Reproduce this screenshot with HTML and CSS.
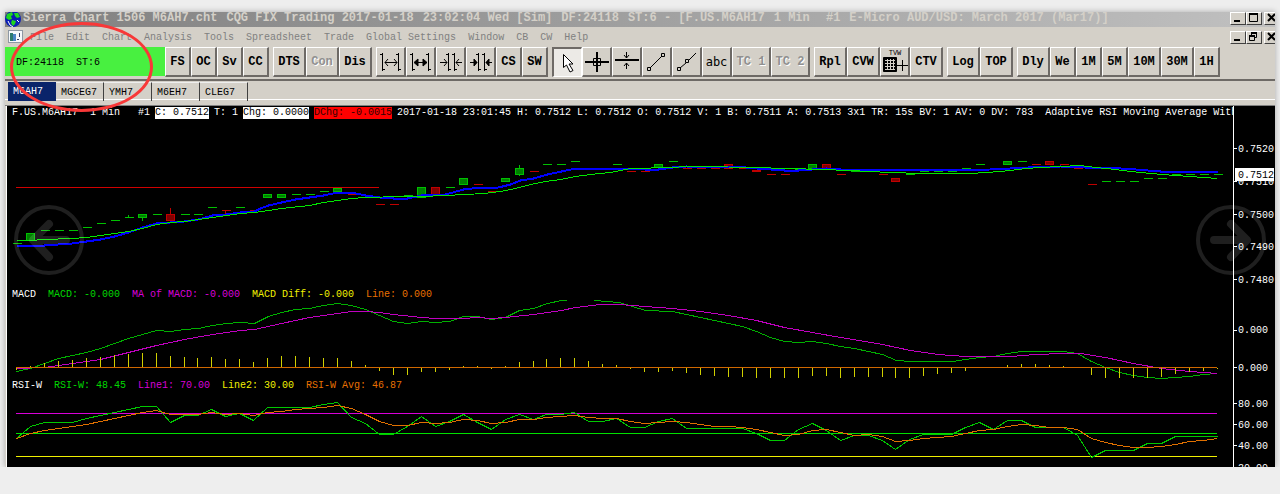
FILE: index.html
```html
<!DOCTYPE html>
<html lang="en">
    <head>
        <meta charset="utf-8">
        <title>Sierra Chart</title>
        <link rel="stylesheet" href="styles.css">
    </head>
    <body>
        <main class="window">
            <header class="title-bar">
                <svg class="globe" viewBox="0 0 16 15">
                    <circle cx="8" cy="7" r="8" fill="#0a1cb4"/>
                    <path d="M2 2L7 0 8 3 6 4 7 7 4 8 1 6zM9 1L13 1 15 5 12 6 10 4zM7 8L11 9 10 12 8 14 6 11z" fill="#1fd61f"/>
                    <path d="M3 9L5 13 8 15M12 8L14 10" stroke="#fff" fill="none"/>
                </svg>
                <div class="title">
                    <span>Sierra Chart 1506 M6AH7.cht</span>
                    <span>CQG FIX Trading 2017-01-18</span>
                    <span>23:02:04 Wed [Sim]</span>
                    <span>DF:24118</span>
                    <span>ST:6 - [F.US.M6AH17</span>
                    <span>1 Min</span>
                    <span>&nbsp;#1</span>
                    <span>E-Micro AUD/USD: March 2017 (Mar17)]</span>
                </div>
                <div class="controls">
                    <button aria-label="Minimize"><svg viewBox="0 0 16 13"><path d="M4 9h6" stroke="#000" stroke-width="2"/></svg></button>
                    <button aria-label="Maximize"><svg viewBox="0 0 16 13"><path d="M3.500 2v7.500h8v-7.500z" stroke="#000" fill="none"/><path d="M3 2h9" stroke="#000" stroke-width="2"/></svg></button>
                    <button class="close" aria-label="Close"><svg viewBox="0 0 16 13"><path d="M4 2l7 7M11 2l-7 7" stroke="#000" stroke-width="2"/></svg></button>
                </div>
            </header>

            <nav class="menu-bar">
                <svg class="doc" viewBox="0 0 15 14">
                    <path d="M0 0h15v13h-15z" fill="#8e98a4"/>
                    <path d="M1 1h13v11h-13z" fill="#f5f8fb"/>
                    <path d="M2 3h3v8h-3z" fill="#2c7a6e"/><path d="M5 4h3v7h-3z" fill="#4a86c8"/>
                    <path d="M9 9h2v1h-2zM11 3h1v4h-1z" fill="#346"/>
                </svg>
                <div class="menus">
                    <a href="#">File</a><a href="#">Edit</a><a href="#">Chart</a><a href="#">Analysis</a><a href="#">Tools</a><a href="#">Spreadsheet</a><a href="#">Trade</a><a href="#">Global Settings</a><a href="#">Window</a><a href="#">CB</a><a href="#">CW</a><a href="#">Help</a>
                </div>
                <div class="controls">
                    <button aria-label="Minimize chart"><svg viewBox="0 0 16 13"><path d="M4 9h6" stroke="#000" stroke-width="2"/></svg></button>
                    <button aria-label="Restore chart"><svg viewBox="0 0 16 13"><path d="M5.500 4v-2.500h5v5h-2M3.500 5.500h5v4h-5z" stroke="#000" fill="none"/><path d="M5 2h6M3 5h6" stroke="#000" stroke-width="2"/></svg></button>
                    <button class="close" aria-label="Close chart"><svg viewBox="0 0 16 13"><path d="M4 2l7 7M11 2l-7 7" stroke="#000" stroke-width="2"/></svg></button>
                </div>
            </nav>

            <div class="toolbar">
                <div class="status"><span>DF:24118</span><span>ST:6</span></div>
                <div class="group">
                    <button>FS</button><button>OC</button><button>Sv</button><button>CC</button>
                </div>
                <div class="group">
                    <button class="wide">DTS</button><button class="wide" disabled>Con</button><button class="wide">Dis</button>
                </div>
                <div class="group">
                    <button class="icon" aria-label="Increase bar spacing"><svg viewBox="0 0 30 30"><path d="M6.500 6v18M4 7.500h3M7 22.500h2M22.500 6v18M20 7.500h3M23 22.500h2M9 15.500h12M12 12l-3 3.500 3 3.500M18 12l3 3.500-3 3.500"/></svg></button>
                    <button class="icon" aria-label="Increase bar width"><svg viewBox="0 0 30 30"><path d="M6.500 6v18M4 7.500h3M7 22.500h2M22.500 6v18M20 7.500h3M23 22.500h2M9 15.500h12"/><path class="solid" d="M12 12v7l-4-3.500zM17 12v7l4-3.500z"/></svg></button>
                    <button class="icon" aria-label="Decrease bar spacing"><svg viewBox="0 0 30 30"><path d="M12.500 6v18M10 7.500h3M13 22.500h2M18.500 6v18M16 7.500h3M19 22.500h2M4 15.500h7M8 12l3 3.500-3 3.500M26 15.500h-6M23 12l-3 3.500 3 3.500"/></svg></button>
                    <button class="icon" aria-label="Decrease bar width"><svg viewBox="0 0 30 30"><path d="M12.500 6v18M10 7.500h3M13 22.500h2M18.500 6v18M16 7.500h3M19 22.500h2M4 15.500h7M26 15.500h-6"/><path class="solid" d="M8 12v7l3-3.500zM23 12v7l-3-3.500z"/></svg></button>
                    <button>CS</button><button>SW</button>
                </div>
                <div class="group">
                    <button class="icon pressed" aria-label="Pointer"><svg viewBox="0 0 30 30"><path d="M10.500 6.500v13l3-2.500 3.500 7 3-1.500-4-6.500h4z" fill="#fff"/></svg></button>
                    <button class="icon" aria-label="Crosshair"><svg viewBox="0 0 30 30"><path d="M3 15h24M15 5v20" stroke-width="2"/><path d="M11.500 11.500h7v7h-7z"/></svg></button>
                    <button class="icon" aria-label="Horizontal line"><svg viewBox="0 0 30 30"><path d="M3 13h24" stroke-width="2"/><path d="M14.500 5v6M12 8l2.500 3 2.500-3M14.500 22v-6M12 19l2.500-3 2.500 3"/></svg></button>
                    <button class="icon" aria-label="Line"><svg viewBox="0 0 30 30"><path d="M8 21l12-12M5.500 20.500h3v3h-3zM19.500 6.500h3v3h-3z"/></svg></button>
                    <button class="icon" aria-label="Ray"><svg viewBox="0 0 30 30"><path d="M8 21l6-5M17 13l7-7M5.500 20.500h3v3h-3zM13.500 12.500h3v3h-3z"/></svg></button>
                    <button class="icon text">abc</button>
                    <button class="tc" disabled>TC 1</button><button class="tc" disabled>TC 2</button>
                </div>
                <div class="group">
                    <button class="wide">Rpl</button><button class="wide">CVW</button>
                    <button class="icon tvw" aria-label="TVW"><span>TVW</span><svg viewBox="0 0 30 19"><path class="solid" d="M2.500 1.500h13v14h-13z"/><path d="M4 4.500h10M4 7.500h10M4 10.500h10M4 13.500h10M6.500 3v11M9.500 3v11M12.500 3v11" stroke="#d4d0c8"/><path d="M16 9.500h11M21.500 4v11"/></svg></button>
                    <button class="wide">CTV</button>
                </div>
                <div class="group">
                    <button class="wide">Log</button><button class="wide">TOP</button>
                </div>
                <div class="group">
                    <button class="wide">Dly</button><button>We</button><button>1M</button><button>5M</button><button class="wide">10M</button><button class="wide">30M</button><button>1H</button>
                </div>
            </div>

            <div class="tabs">
                <button class="active">M6AH7</button><button>MGCEG7</button><button>YMH7</button><button>M6EH7</button><button>CLEG7</button>
            </div>

            <section class="chart">
                <div class="plots">
                    <div class="legend price">
                        <span>F.US.M6AH17  1 Min   #1</span>
                        <span class="last">C: 0.7512</span>
                        <span>T: 1</span>
                        <span class="last">Chg: 0.0000</span>
                        <span class="loss">DChg: -0.0015</span>
                        <span>2017-01-18 23:01:45 H: 0.7512 L: 0.7512 O: 0.7512 V: 1 B: 0.7511 A: 0.7513 3x1 TR: 15s BV: 1 AV: 0 DV: 783  Adaptive RSI Moving Average With</span>
                    </div>
                    <svg id="price" class="plot price-plot" viewBox="6.5 118.5 1226 169" preserveAspectRatio="none"></svg>
                    <div class="legend">
                        <span>MACD</span>
                        <span class="green">MACD: -0.000</span>
                        <span class="magenta">MA of MACD: -0.000</span>
                        <span class="yellow">MACD Diff: -0.000</span>
                        <span class="orange">Line: 0.000</span>
                    </div>
                    <svg id="macd" class="plot macd-plot" viewBox="6.5 299.5 1226 79" preserveAspectRatio="none"></svg>
                    <div class="legend">
                        <span>RSI-W</span>
                        <span class="green">RSI-W: 48.45</span>
                        <span class="magenta">Line1: 70.00</span>
                        <span class="yellow">Line2: 30.00</span>
                        <span class="orange">RSI-W Avg: 46.87</span>
                    </div>
                    <svg id="rsi" class="plot rsi-plot" viewBox="6.5 390.5 1226 76" preserveAspectRatio="none"></svg>
                </div>
                <svg class="axis" viewBox="0 106 42 361">
                    <path d="M.5 106v361M1 148.500h3M1 181.500h3M1 214.500h3M1 246.500h3M1 279.500h3M1 330.500h3M1 367.500h3M1 403.500h3M1 424.500h3M1 445.500h3"/>
                    <text x="5" y="152">0.7520</text>
                    <text x="5" y="185">0.7510</text>
                    <text x="5" y="218">0.7500</text>
                    <text x="5" y="250">0.7490</text>
                    <text x="5" y="283">0.7480</text>
                    <rect x="2" y="168" width="39" height="13" fill="#fff"/>
                    <text class="current" x="5" y="178">0.7512</text>
                    <text x="5" y="333">0.000</text>
                    <text x="5" y="371">0.000</text>
                    <text x="5" y="407">80.00</text>
                    <text x="5" y="428">60.00</text>
                    <text x="5" y="449">40.00</text>
                    <text x="5" y="471">20.00</text>
                </svg>
            </section>
        </main>

        <button class="nav prev" aria-label="Previous"><svg viewBox="0 0 70 70"><circle cx="35" cy="35" r="33"/><path d="M52 35H20M35 19L19 35l16 17"/></svg></button>
        <button class="nav next" aria-label="Next"><svg viewBox="0 0 70 70"><circle cx="35" cy="35" r="33"/><path d="M18 35H50M35 19L51 35l-16 17"/></svg></button>
        <div class="marker"></div>

        <script type="text/javascript">
            var NS = "http://www.w3.org/2000/svg",
                price = document.getElementById("price"),
                macd = document.getElementById("macd"),
                rsi = document.getElementById("rsi");

            // x of the bar number i
            function barX(i){
                return Math.round(16 + i*13.96);
            }
            function add(parent, name, attrs){
                var el = document.createElementNS(NS, name);
                for(var key in attrs) el.setAttribute(key, attrs[key]);
                parent.appendChild(el);
            }
            function line(parent, cls, points){
                add(parent, "polyline", {"class": cls, points: points});
            }
            // one y value per bar
            function series(parent, cls, values){
                line(parent, cls, values.map(function(y, i){
                    return barX(i)+","+y;
                }).join(" "));
            }
            // horizontal line
            function level(parent, cls, y, to){
                add(parent, "rect", {"class": cls, x: 15.5, y: y-0.5, width: (to || 1217)-16, height: 1});
            }

            // bar, direction, top, bottom, wick top, wick bottom
            var candles = [
                [0,"g",243],[1,"g",233,240],[2,"g",230],[3,"g",230],[4,"g",230],[5,"g",227],[6,"g",223],[7,"g",220],
                [8,"g",217,217,214,217],[9,"g",214,217,214,220],[10,"g",214],[11,"r",214,220,207,221],[12,"g",214],[13,"g",214],
                [14,"g",207],[15,"r",210,210,210,213],[16,"g",207],[17,"r",210],[18,"g",194,197],[19,"g",194,197],[20,"g",194],
                [21,"g",194],[22,"g",191],[23,"g",188,191],[24,"r",194],[25,"r",197],[26,"r",204],[27,"r",204],[28,"g",195],
                [29,"g",187,197],[30,"r",187,194],[31,"g",187],[32,"g",178,184],[33,"r",184],[34,"r",191],[35,"g",178,181],
                [36,"g",168,174,164,175],[37,"r",171],[38,"g",164],[39,"g",164],[40,"g",161],[43,"g",164],[44,"r",171],[45,"r",171],
                [46,"g",164,167],[47,"g",161],[48,"r",168],[49,"r",168],[50,"r",168],[51,"r",164,168],[52,"r",168],[53,"r",170,171],
                [54,"r",174],[55,"r",174],[56,"g",169],[57,"g",164,168],[58,"r",164,168],[59,"r",174],[60,"g",171],[61,"g",171],
                [62,"r",174],[63,"r",178,181],[64,"g",174],[65,"g",171],[66,"g",171],[67,"g",171],[68,"g",168],[69,"g",164],
                [70,"r",168],[71,"g",161,164],[72,"g",161],[73,"r",164],[74,"r",161,164],[75,"r",164],[76,"r",168],[77,"r",184],
                [78,"g",181],[79,"g",181],[80,"g",181],[81,"g",178],[82,"g",178],[83,"g",174],[84,"g",174],[85,"g",174],[86,"g",174]
            ];
            candles.forEach(function(c){
                var x = barX(c[0]), cls = c[1] == "g" ? "up" : "down";
                if(c[4]) line(price, "wick "+cls, x+","+c[4]+" "+x+","+c[5]);
                if(c[3] > c[2]) add(price, "rect", {"class": "body "+cls, x: x-4, y: c[2], width: 8, height: c[3]-c[2]});
                else line(price, "wick "+cls, (x-4)+","+c[2]+" "+(x+5)+","+c[2]);
            });
            level(price, "level-red", 187, 379);
            line(price, "line-blue", "16,245 44,245 58,244 72,243 86,241 100,239 114,236 128,232 142,227 156,223 170,222 184,221 198,219 212,215 226,214 240,212 254,211 260,208 268,205 281,202 295,199 309,197 323,195 337,192 351,192 365,195 379,197 393,198 407,198 421,195 445,194 463,189 472,188 498,187 510,184 520,180 533,178 547,174 561,171 575,168 630,168 645,169 658,169 672,167 686,166 745,167 756,168 784,170 798,170 812,169 826,168 840,169 868,169 880,170 990,169 1010,168 1028,167 1060,166 1085,167 1105,167 1120,168 1135,169 1160,171 1217,171");
            line(price, "line-lime", "16,240 30,240 44,239 72,238 86,237 100,235 114,233 128,231 142,228 156,224 170,222 184,221 198,219 212,217 226,215 240,213 254,212 268,210 281,208 309,205 323,202 337,200 351,198 365,197 400,196 421,196 445,195 484,193 500,191 515,188 530,184 545,181 560,179 575,176 590,174 610,172 630,168 672,167 686,166 705,166 750,167 790,168 850,170 868,171 890,172 920,173 970,173 985,172 1000,171 1010,170 1025,168 1040,167 1060,166 1080,165 1095,167 1115,169 1130,171 1150,173 1175,175 1190,176 1217,178");

            line(macd, "line-green", "16,371 30,368 44,363 58,358 72,355 86,352 100,348 114,343 128,338 142,334 156,330 170,331 184,329 198,328 212,325 226,323 240,322 254,323 268,316 281,312 295,309 309,308 323,305 337,303 351,305 365,309 379,315 393,321 407,323 421,321 435,322 449,321 463,316 477,316 491,319 505,317 519,310 533,308 547,303 561,300 565,300 575,296 589,296 594,300 619,302 645,310 672,311 686,314 714,320 742,326 756,331 770,337 784,341 798,342 812,341 826,343 840,346 854,348 868,351 882,354 896,360 910,361 952,361 965,359 979,357 993,356 1007,353 1021,351 1063,351 1077,353 1091,361 1105,367 1119,372 1133,375 1147,377 1161,378 1175,377 1189,376 1203,374 1217,373");
            line(macd, "line-purple", "16,368 44,367 72,363 100,359 128,352 156,345 184,339 212,334 240,330 254,329 281,323 309,317 337,313 351,311 365,311 379,312 393,314 421,317 435,318 463,318 477,317 491,318 505,317 533,314 561,310 575,307 600,304 619,304 645,306 672,308 700,311 728,315 756,320 784,327 812,332 840,337 882,344 910,350 938,354 965,356 1010,356 1035,354 1063,353 1080,353 1105,357 1133,363 1161,368 1189,371 1217,373");
            var diff = [-2,2,5,7,8,10,11,13,14,15,15,12,11,10,11,9,9,6,10,12,12,11,10,10,7,3,-3,-7,-7,-4,-4,-2,2,2,-1,2,6,7,9,10,10,7,4,3,-1,-4,-4,-3,-5,-7,-8,-9,-9,-10,-10,-10,-10,-8,-8,-10,-9,-9,-9,-10,-10,-8,-6,-5,-3,0,0,3,4,4,3,2,0,-7,-10,-10,-10,-10,-9,-6,-4,-3,-1];
            diff.forEach(function(h, i){
                if(h) line(macd, "line-bar", barX(i)+",367 "+barX(i)+","+(367-h));
            });
            level(macd, "level-brown", 367);

            level(rsi, "level-magenta", 413);
            level(rsi, "level-green", 433);
            level(rsi, "level-yellow", 456);
            series(rsi, "line-rsi", [438,426,422,422,422,418,415,412,409,406,406,422,415,415,409,416,413,420,407,407,407,407,404,402,417,423,434,434,426,416,426,421,414,422,429,419,414,419,414,414,412,421,421,418,427,427,421,418,428,428,428,428,428,433,440,440,429,423,430,440,435,435,440,449,439,434,434,434,427,422,429,420,420,427,427,427,435,457,450,450,450,443,443,436,436,436,436]);
            series(rsi, "line-orange", [438,433,430,428,426,424,421,418,415,412,410,414,414,414,412,414,413,415,412,411,409,408,407,405,408,414,421,425,425,422,423,422,419,420,423,422,419,419,417,416,415,417,418,418,421,423,422,421,422,424,426,426,427,429,432,435,434,430,429,432,435,434,436,441,440,438,437,436,433,430,429,426,424,425,427,427,429,438,442,445,447,447,446,444,441,440,438]);
        </script>
    </body>
</html>
```
FILE: styles.css
```css
body{
    margin: 0;
    padding: 12px 5px 0;
    background: #EEE;
    font: 10px/12px "Liberation Mono", monospace;
    position: relative;
}
*{
    box-sizing: border-box;
}
button{
    margin: 0;
    padding: 0;
    border: none;
    font: inherit;
    color: #000;
    background: #D4D0C8;
}
svg{
    display: block;
}

.window{
    background: #D4D0C8;
    overflow: hidden;
    box-shadow: 0 0 6px rgba(0, 0, 0, .3);
}

.title-bar{
    display: flex;
    height: 15px;
    background: linear-gradient(to right, #808080, #C0C0C0);
    color: #D4D0C8;
    font-size: 12px;
    font-weight: bold;
}
.globe{
    width: 16px;
    height: 15px;
    margin-right: 2px;
}
.title{
    display: flex;
    flex: 1;
    gap: 9px;
    overflow: hidden;
    white-space: nowrap;
}
.controls{
    display: flex;
    margin-right: -5px;
}
.controls button{
    width: 16px;
    height: 13px;
    border: 1px solid #FFF;
    border-right-color: #404040;
    border-bottom-color: #404040;
}
.controls svg{
    width: 16px;
    height: 13px;
    margin: -1px;
}
.controls .close{
    margin-left: 2px;
}

.menu-bar{
    display: flex;
    align-items: center;
    height: 20px;
    padding-left: 3px;
}
.doc{
    width: 15px;
    height: 14px;
}
.menus{
    display: flex;
    flex: 1;
    gap: 12px;
    padding: 2px 0 0 7px;
}
.menus a{
    color: #808080;
    text-decoration: none;
    white-space: nowrap;
}

.toolbar{
    display: flex;
    gap: 4px;
    height: 34px;
    border-bottom: 2px solid #6E6A66;
}
.status{
    display: flex;
    flex: none;
    align-items: center;
    gap: 12px;
    width: 160px;
    height: 29px;
    margin-right: -4px;
    padding: 2px 0 0 11px;
    background: #48F040;
}
.group{
    display: flex;
    flex: none;
}
.group button{
    width: 26px;
    height: 30px;
    border: 1px solid #FFF;
    border-right: 2px solid #6E6A66;
    border-bottom: 2px solid #6E6A66;
    font-size: 12px;
    font-weight: bold;
}
.group button:disabled{
    color: #909090;
    text-shadow: 1px 1px 0 #FFF;
}
.group .wide{
    width: 33px;
}
.group .tc{
    width: 39px;
}
.group .icon{
    width: 30px;
}
.group .text{
    font: 12px "DejaVu Sans Mono", monospace;
}
.group .pressed{
    border: 1px solid #FFF;
    border-top: 2px solid #6E6A66;
    border-left: 2px solid #6E6A66;
    background: #ECEAE6;
}
.icon svg{
    width: 30px;
    height: 30px;
    margin: -1px;
    fill: none;
    stroke: #000;
}
.icon .solid{
    fill: #000;
}
.group .tvw{
    display: flex;
    flex-direction: column;
    font: 7px/8px "Liberation Mono", monospace;
    padding: 1px 0 0 1px;
}
.tvw svg{
    height: 19px;
}

.tabs{
    display: flex;
    height: 25px;
    padding: 1px 3px 4px;
    border-bottom: 1px solid #808080;
    box-shadow: inset 0 -5px 0 #D4D0C8, inset 0 -6px 0 #FFF;
}
.tabs button{
    width: 48px;
    height: 19px;
    padding: 1px 0 0 5px;
    border-top: 1px solid #EEE;
    border-right: 1px solid #404040;
    background: none;
    text-align: left;
}
.tabs .active{
    border: none;
    background: #0A246A;
    color: #FFF;
}

.chart{
    display: flex;
    background: #000;
    border-left: 1px solid #FFF;
    margin-left: 1px;
    overflow: hidden;
}
.plots{
    flex: 1;
    min-width: 0;
}
.legend{
    display: flex;
    gap: 12px;
    height: 12px;
    padding: 1px 0 0 5px;
    color: #FFF;
    white-space: pre;
    overflow: hidden;
}
.price{
    gap: 5px;
    height: 13px;
}
.last{
    background: #FFF;
    color: #000;
}
.loss{
    background: #F00;
    color: #300;
}
.green{
    color: #00D800;
}
.magenta{
    color: #D800D8;
}
.yellow{
    color: #F0F000;
}
.orange{
    color: #E87000;
}

.plot{
    width: 100%;
    fill: none;
    shape-rendering: crispEdges;
}
.price-plot{
    height: 169px;
}
.macd-plot{
    height: 79px;
}
.rsi-plot{
    height: 76px;
}
.up{
    stroke: #00C000;
}
.down{
    stroke: #C00000;
}
.body.up{
    fill: #008000;
}
.body.down{
    fill: #800000;
}
.level-red{
    fill: #D00000;
}
.level-brown{
    fill: #D06800;
}
.level-magenta{
    fill: #D800D8;
}
.level-green{
    fill: #00E000;
}
.level-yellow{
    fill: #F0F000;
}
.line-blue{
    stroke: #00F;
    stroke-width: 2;
}
.line-lime{
    stroke: #00E800;
}
.line-green{
    stroke: #00B000;
}
.line-purple{
    stroke: #C000C0;
}
.line-bar{
    stroke: #D0D000;
}
.line-rsi{
    stroke: #00C800;
}
.line-orange{
    stroke: #E07000;
}

.axis{
    flex: none;
    width: 42px;
    height: 361px;
    fill: #FFF;
    stroke: none;
}
.axis path{
    stroke: #FFF;
    shape-rendering: crispEdges;
}
.axis .current{
    fill: #000;
}

.nav{
    position: absolute;
    top: 205px;
    width: 70px;
    height: 70px;
    background: none;
    cursor: pointer;
}
.nav svg{
    fill: none;
    stroke: rgba(255, 255, 255, .12);
    stroke-width: 4;
}
.nav path{
    stroke-width: 8;
    stroke-linecap: round;
    stroke-linejoin: round;
}
.prev{
    left: 14px;
}
.next{
    right: 14px;
}
.marker{
    position: absolute;
    left: 10px;
    top: 22px;
    width: 143px;
    height: 90px;
    border: 3px solid #F83838;
    border-radius: 50%;
    pointer-events: none;
}
```
